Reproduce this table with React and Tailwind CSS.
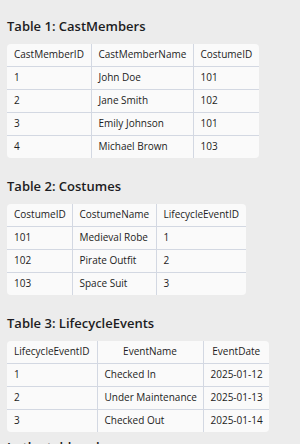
const tables = [
  {
    title: "Table 1: CastMembers",
    widths: ["w-[84px]", "w-[102px]", "w-[66px]"],
    total: "w-[252px]",
    head: ["CastMemberID", "CastMemberName", "CostumeID"],
    rows: [
      ["1", "John Doe", "101"],
      ["2", "Jane Smith", "102"],
      ["3", "Emily Johnson", "101"],
      ["4", "Michael Brown", "103"],
    ],
  },
  {
    title: "Table 2: Costumes",
    widths: ["w-[65px]", "w-[84px]", "w-[90px]"],
    total: "w-[239px]",
    head: ["CostumeID", "CostumeName", "LifecycleEventID"],
    rows: [
      ["101", "Medieval Robe", "1"],
      ["102", "Pirate Outfit", "2"],
      ["103", "Space Suit", "3"],
    ],
  },
  {
    title: "Table 3: LifecycleEvents",
    widths: ["w-[90px]", "w-[106px]", "w-[66px]"],
    total: "w-[262px]",
    head: ["LifecycleEventID", "EventName", "EventDate"],
    rows: [
      ["1", "Checked In", "2025-01-12"],
      ["2", "Under Maintenance", "2025-01-13"],
      ["3", "Checked Out", "2025-01-14"],
    ],
  },
];

const DataTable = ({ t }) => (
  <div className={`${t.total} overflow-hidden rounded-[4px] bg-[#fafafa]`}>
    <table className="w-full table-fixed border-collapse text-[10px] text-[#1c1c22]">
      <thead>
        <tr>
          {t.head.map((h, i) => (
            <th
              key={h}
              className={`${t.widths[i]} h-[22px] whitespace-nowrap border-b border-[#d3d8e2] px-[7px] text-center font-normal ${
                i < 2 ? "border-r" : ""
              }`}
            >
              {h}
            </th>
          ))}
        </tr>
      </thead>
      <tbody>
        {t.rows.map((r, ri) => (
          <tr key={ri}>
            {r.map((c, i) => (
              <td
                key={i}
                className={`h-[23px] whitespace-nowrap border-[#d3d8e2] px-[7px] text-left ${
                  i < 2 ? "border-r" : ""
                } ${ri < t.rows.length - 1 ? "border-b" : ""}`}
              >
                {c}
              </td>
            ))}
          </tr>
        ))}
      </tbody>
    </table>
  </div>
);

export default function App() {
  return (
    <div className="h-[444px] overflow-hidden bg-[#ececec] px-[7px] pt-[16px] font-['Open_Sans',sans-serif]">
      <div className="flex flex-col gap-[18px]">
        {tables.map((t) => (
          <section key={t.title}>
            <h3 className="mb-2 text-[13px] leading-5 font-semibold text-[#1c1c22]">{t.title}</h3>
            <DataTable t={t} />
          </section>
        ))}
      </div>
      <h3 className="mt-[5px] text-[13px] leading-5 font-semibold text-[#1c1c22]">In the tables above</h3>
    </div>
  );
}
